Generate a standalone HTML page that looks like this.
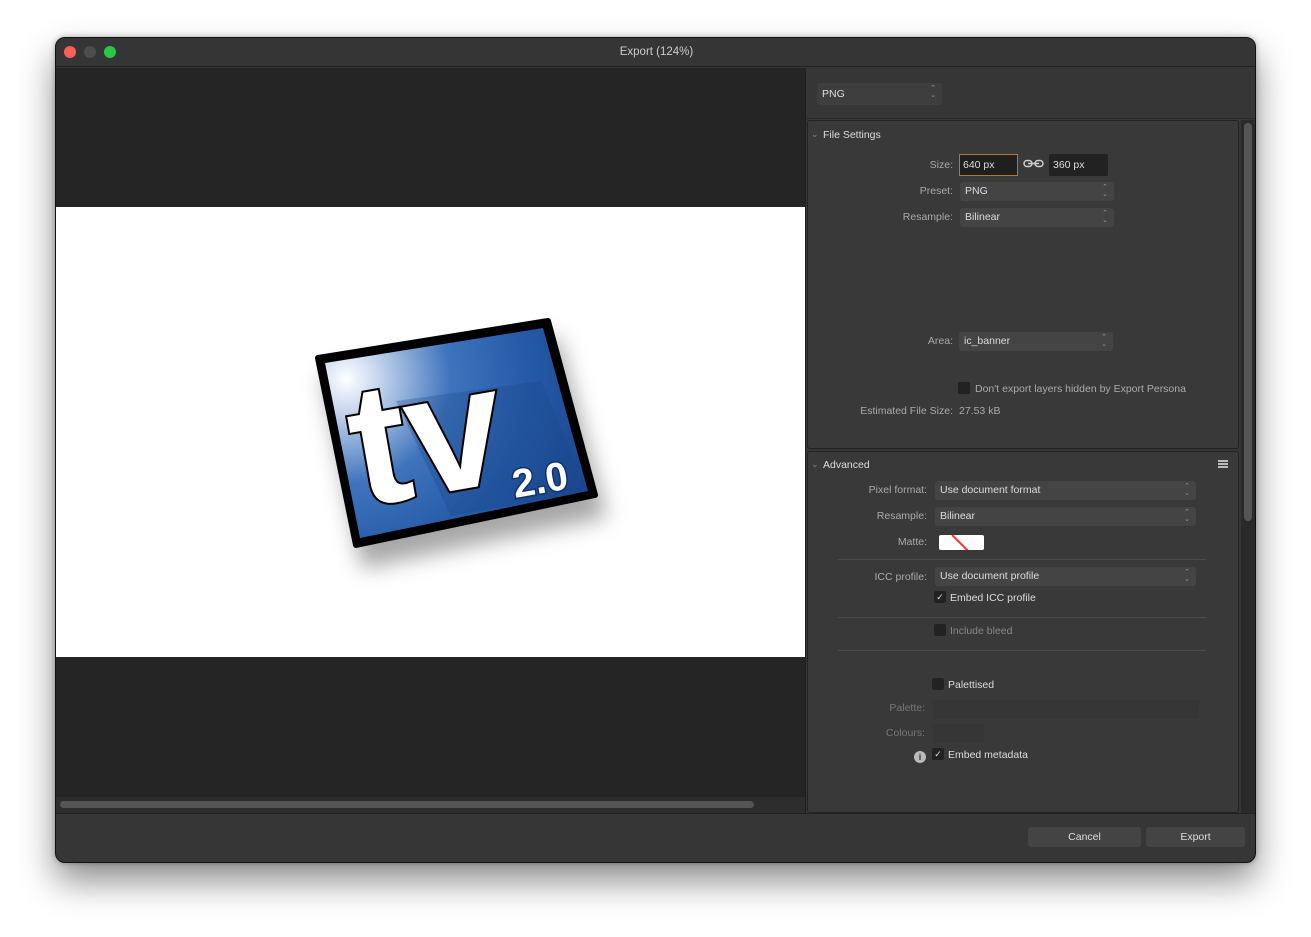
<!DOCTYPE html>
<html><head><meta charset="utf-8"><style>
*{margin:0;padding:0;box-sizing:border-box}
body{width:1311px;height:937px;background:#fff;position:relative;overflow:hidden;font-family:"Liberation Sans",sans-serif;font-size:10.5px;color:#ddd}
.win{position:absolute;left:55px;top:37px;width:1201px;height:826px;background:#363636;border-radius:10px;border:1px solid #111;overflow:hidden;box-shadow:0 18px 35px rgba(0,0,0,.45),0 0 6px rgba(0,0,0,.3)}
.a{position:absolute}
.title{left:0;top:0;width:1201px;height:29px;background:#353535;border-bottom:1px solid #222;text-align:center;line-height:29px;color:#ccc;font-size:11.5px}
.dot{width:12px;height:12px;border-radius:50%;top:8px}
.lbl{color:#aaa;text-align:right}
.dd{background:#444;border-radius:3px;height:19px;line-height:19px;padding-left:5px;color:#ddd}
.dd:after{content:"\2303\A\2304";white-space:pre;position:absolute;right:6px;top:-1px;font-size:7px;line-height:7px;color:#999;padding-top:3px}
.cb{width:12px;height:12px;background:#222;border-radius:2px;color:#ddd;font-size:9px;line-height:12px;text-align:center}
.sep{height:1px;background:#4a4a4a}
.btn{background:#444;border-radius:3px;height:20px;line-height:20px;text-align:center;color:#ddd}
</style></head><body>
<div class="win">
<div class="a title">Export (124%)</div>
<div class="a dot" style="left:8px;background:#fe5f57"></div>
<div class="a dot" style="left:28px;background:#4d4d4d"></div>
<div class="a dot" style="left:48px;background:#28c840"></div>
<!-- preview -->
<div class="a" style="left:0;top:30px;width:749px;height:730px;background:#252525"></div>
<div class="a" style="left:0;top:169px;width:749px;height:450px;background:#fff">
<svg width="749" height="450" viewBox="55 206 749 450" style="position:absolute;left:0;top:0">
<defs>
<filter id="sh" x="-30%" y="-30%" width="160%" height="160%"><feDropShadow dx="8" dy="20" stdDeviation="11" flood-color="#000" flood-opacity=".35"/></filter>
<radialGradient id="g" cx="345" cy="378" r="260" gradientUnits="userSpaceOnUse">
<stop offset="0" stop-color="#ffffff"/><stop offset=".12" stop-color="#c9d8ee"/><stop offset=".4" stop-color="#3f74bd"/><stop offset=".7" stop-color="#245aa6"/><stop offset="1" stop-color="#1c4790"/></radialGradient>
</defs>
<g filter="url(#sh)">
<polygon points="317,357 547,320 594,494 355,544" fill="#000" stroke="#000" stroke-width="6" stroke-linejoin="round"/>
</g>
<polygon points="324,362 542,327 587,490 359,537" fill="url(#g)"/>
<polygon points="395,400 540,380 587,490 450,515" fill="#1a4488" opacity=".3"/>
<g transform="translate(360,506) rotate(-10)">
<text x="0" y="0" font-family="Liberation Sans, Arial, sans-serif" font-weight="700" font-size="172" fill="#fff" stroke="#000" stroke-width="4" paint-order="stroke">tv</text>
</g>
<g transform="translate(514,497) rotate(-10)">
<text x="0" y="0" font-family="Liberation Sans, Arial, sans-serif" font-weight="700" font-size="40" fill="#fff" stroke="#12306a" stroke-width="3" paint-order="stroke">2.0</text>
</g>
</svg>
</div>
<div class="a" style="left:0;top:759px;width:749px;height:16px;background:#2d2d2d"></div>
<div class="a" style="left:4px;top:763px;width:694px;height:7px;background:#555;border-radius:4px"></div>
<div class="a" style="left:749px;top:30px;width:1px;height:745px;background:#1e1e1e"></div>
<div class="a" style="left:0;top:775px;width:1201px;height:1px;background:#222"></div>
<!-- right panel -->
<div class="a dd" style="left:761px;top:45px;width:125px;height:22px;line-height:22px;background:#3e3e3e">PNG</div>
<div class="a" style="left:750px;top:80px;width:451px;height:1px;background:#2a2a2a"></div>
<div class="a" style="left:751px;top:82px;width:432px;height:329px;background:#393939;border:1px solid #222;border-radius:3px"></div>
<div class="a" style="left:751px;top:413px;width:432px;height:362px;background:#393939;border:1px solid #222;border-radius:3px"></div>
<div class="a" style="left:1185px;top:82px;width:15px;height:693px;background:#2a2a2a"></div>
<div class="a" style="left:1188px;top:85px;width:8px;height:398px;background:#555;border-radius:4px"></div>

<div class="a" style="left:755px;top:91px;color:#888;font-size:9px">&#8964;</div>
<div class="a" style="left:767px;top:91px;color:#ddd">File Settings</div>
<div class="a lbl" style="left:780px;top:121px;width:117px">Size:</div>
<div class="a" style="left:903px;top:116px;width:59px;height:22px;background:#1f1f1f;border:1px solid #b07a2a;line-height:20px;padding-left:3px">640 px</div>
<svg class="a" style="left:967px;top:121px" width="21" height="9" viewBox="0 0 21 9"><rect x="1" y="1.5" width="8" height="6" rx="3" fill="none" stroke="#ccc" stroke-width="1.5"/><rect x="12" y="1.5" width="8" height="6" rx="3" fill="none" stroke="#ccc" stroke-width="1.5"/><line x1="5" y1="4.5" x2="16" y2="4.5" stroke="#ccc" stroke-width="1.5"/></svg>
<div class="a" style="left:993px;top:116px;width:59px;height:22px;background:#222;border-radius:2px;line-height:22px;padding-left:4px">360 px</div>
<div class="a lbl" style="left:780px;top:147px;width:117px">Preset:</div>
<div class="a dd" style="left:904px;top:144px;width:154px">PNG</div>
<div class="a lbl" style="left:780px;top:173px;width:117px">Resample:</div>
<div class="a dd" style="left:904px;top:170px;width:154px">Bilinear</div>
<div class="a lbl" style="left:780px;top:297px;width:117px">Area:</div>
<div class="a dd" style="left:903px;top:294px;width:154px">ic_banner</div>
<div class="a cb" style="left:902px;top:344px"></div>
<div class="a" style="left:919px;top:345px;color:#aaa">Don't export layers hidden by Export Persona</div>
<div class="a lbl" style="left:760px;top:367px;width:137px">Estimated File Size:</div>
<div class="a" style="left:903px;top:367px;color:#aaa">27.53 kB</div>

<div class="a" style="left:755px;top:421px;color:#888;font-size:9px">&#8964;</div>
<div class="a" style="left:767px;top:421px">Advanced</div>
<div class="a" style="left:1162px;top:422px;width:10px;height:2px;background:#bbb;box-shadow:0 3px 0 #bbb,0 6px 0 #bbb"></div>
<div class="a lbl" style="left:760px;top:446px;width:111px">Pixel format:</div>
<div class="a dd" style="left:879px;top:443px;width:261px">Use document format</div>
<div class="a lbl" style="left:760px;top:472px;width:111px">Resample:</div>
<div class="a dd" style="left:879px;top:469px;width:261px">Bilinear</div>
<div class="a lbl" style="left:760px;top:498px;width:111px">Matte:</div>
<div class="a" style="left:883px;top:497px;width:45px;height:15px;background:#fff;border-radius:2px;overflow:hidden"><div style="position:absolute;left:20px;top:-3px;width:1.5px;height:22px;background:#f33;transform:rotate(-45deg)"></div></div>
<div class="a sep" style="left:782px;top:521px;width:368px"></div>
<div class="a lbl" style="left:760px;top:533px;width:111px">ICC profile:</div>
<div class="a dd" style="left:879px;top:529px;width:261px">Use document profile</div>
<div class="a cb" style="left:878px;top:553px">&#10003;</div>
<div class="a" style="left:894px;top:554px">Embed ICC profile</div>
<div class="a sep" style="left:782px;top:579px;width:368px"></div>
<div class="a cb" style="left:878px;top:586px"></div>
<div class="a" style="left:894px;top:587px;color:#888">Include bleed</div>
<div class="a sep" style="left:782px;top:612px;width:368px"></div>
<div class="a cb" style="left:876px;top:640px"></div>
<div class="a" style="left:892px;top:641px">Palettised</div>
<div class="a lbl" style="left:760px;top:664px;width:109px;color:#777">Palette:</div>
<div class="a" style="left:877px;top:662px;width:266px;height:19px;background:#363636;border-radius:2px"></div>
<div class="a lbl" style="left:760px;top:689px;width:109px;color:#777">Colours:</div>
<div class="a" style="left:877px;top:686px;width:51px;height:19px;background:#363636;border-radius:2px"></div>
<div class="a" style="left:858px;top:713px;width:12px;height:12px;border-radius:50%;background:#bbb;color:#333;font-size:9px;font-weight:bold;text-align:center;line-height:12px">i</div>
<div class="a cb" style="left:876px;top:710px">&#10003;</div>
<div class="a" style="left:892px;top:711px">Embed metadata</div>

<div class="a btn" style="left:972px;top:789px;width:113px">Cancel</div>
<div class="a btn" style="left:1090px;top:789px;width:99px">Export</div>
</div>
</body></html>
